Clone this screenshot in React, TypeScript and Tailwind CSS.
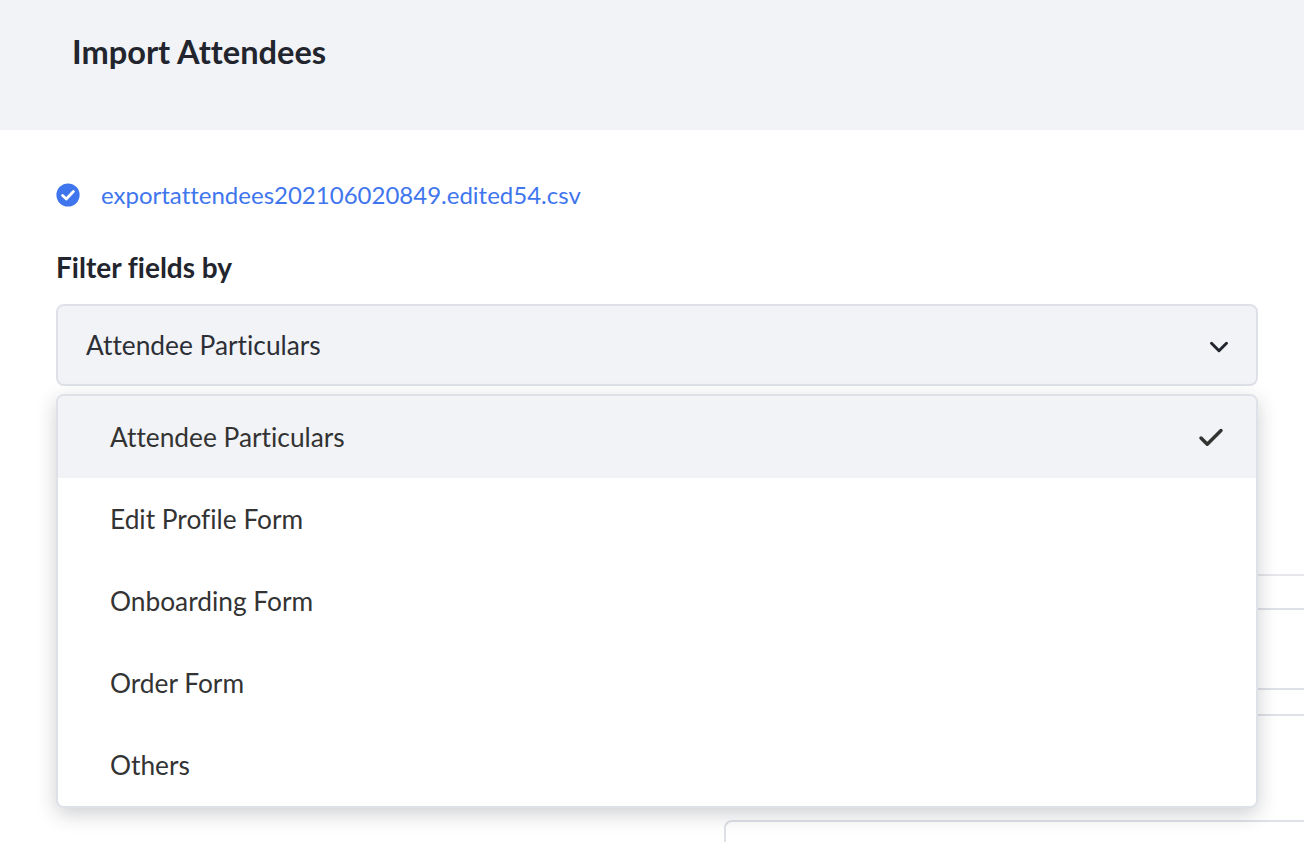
import { Check, ChevronDown } from "lucide-react"

const options = ["Attendee Particulars", "Edit Profile Form", "Onboarding Form", "Order Form", "Others"]

const App = () => {
  return (
    <div className="h-[842px] overflow-hidden bg-white font-['Lato',sans-serif] text-[#22252d] antialiased [font-variant-ligatures:none]">
      <header className="h-[130px] bg-[#f2f3f7] pl-[72px] pt-[31px]">
        <h1 className="text-[32.6px] leading-[42px] font-bold">Import Attendees</h1>
      </header>

      <div className="pl-[56px] pr-[46px]">
        <div className="mt-[51px] flex h-[28px] items-center gap-[21px]">
          <svg width="24" height="24" viewBox="0 0 24 24">
            <circle cx="12" cy="12" r="11.6" fill="#3f76ee" />
            <path d="M6.6 12.4l3.7 3.5 7.1-7.3" fill="none" stroke="#fff" strokeWidth="2.8" strokeLinecap="round" strokeLinejoin="round" />
          </svg>
          <a className="text-[24px] leading-[28px] text-[#3f76ee]">exportattendees202106020849.edited54.csv</a>
        </div>

        <p className="mt-[41px] text-[28px] leading-[34px] font-bold">Filter fields by</p>

        <div className="relative mt-[20px]">
          <div className="flex h-[82px] items-center justify-between rounded-lg border-2 border-[#dfe1e8] bg-[#f2f3f7] pl-[28px] pr-[22px] text-[26.3px] text-[#2c2f36]">
            <span className="mt-[2px]">Attendee Particulars</span>
            <ChevronDown size={30} strokeWidth={2.4} className="mt-[3px] text-[#22252d]" />
          </div>

          <ul className="absolute left-0 right-0 top-[90px] z-10 overflow-hidden rounded-lg border-2 border-[#dfe1e8] bg-white text-[26.3px] text-[#333] shadow-[0_6px_20px_rgba(30,35,50,0.22)]">
            {options.map((o, i) => (
              <li key={o} className={`flex h-[82px] items-center justify-between pl-[52px] pr-[30px] ${i === 0 ? "bg-[#f2f3f7]" : "bg-white"}`}>
                <span className="mt-[2px]">{o}</span>
                {i === 0 && <Check size={30} strokeWidth={2.8} className="mt-[2px] text-[#333]" />}
              </li>
            ))}
          </ul>

          {/* form rows behind the open menu */}
          <div className="ml-[668px] -mr-[46px] mt-[188px]">
            <div className="h-[34px] border-t-2 border-[#e6e7ea]" />
            <div className="h-[80px] border-t-2 border-[#dfe1e8]" />
            <div className="h-[26px] border-t-2 border-[#dfe1e8]" />
            <div className="h-[106px] border-t-2 border-[#dfe1e8]" />
            <div className="h-[40px] rounded-tl-lg border-l-2 border-t-2 border-[#dfe1e8]" />
          </div>
        </div>
      </div>
    </div>
  )
}

export default App
